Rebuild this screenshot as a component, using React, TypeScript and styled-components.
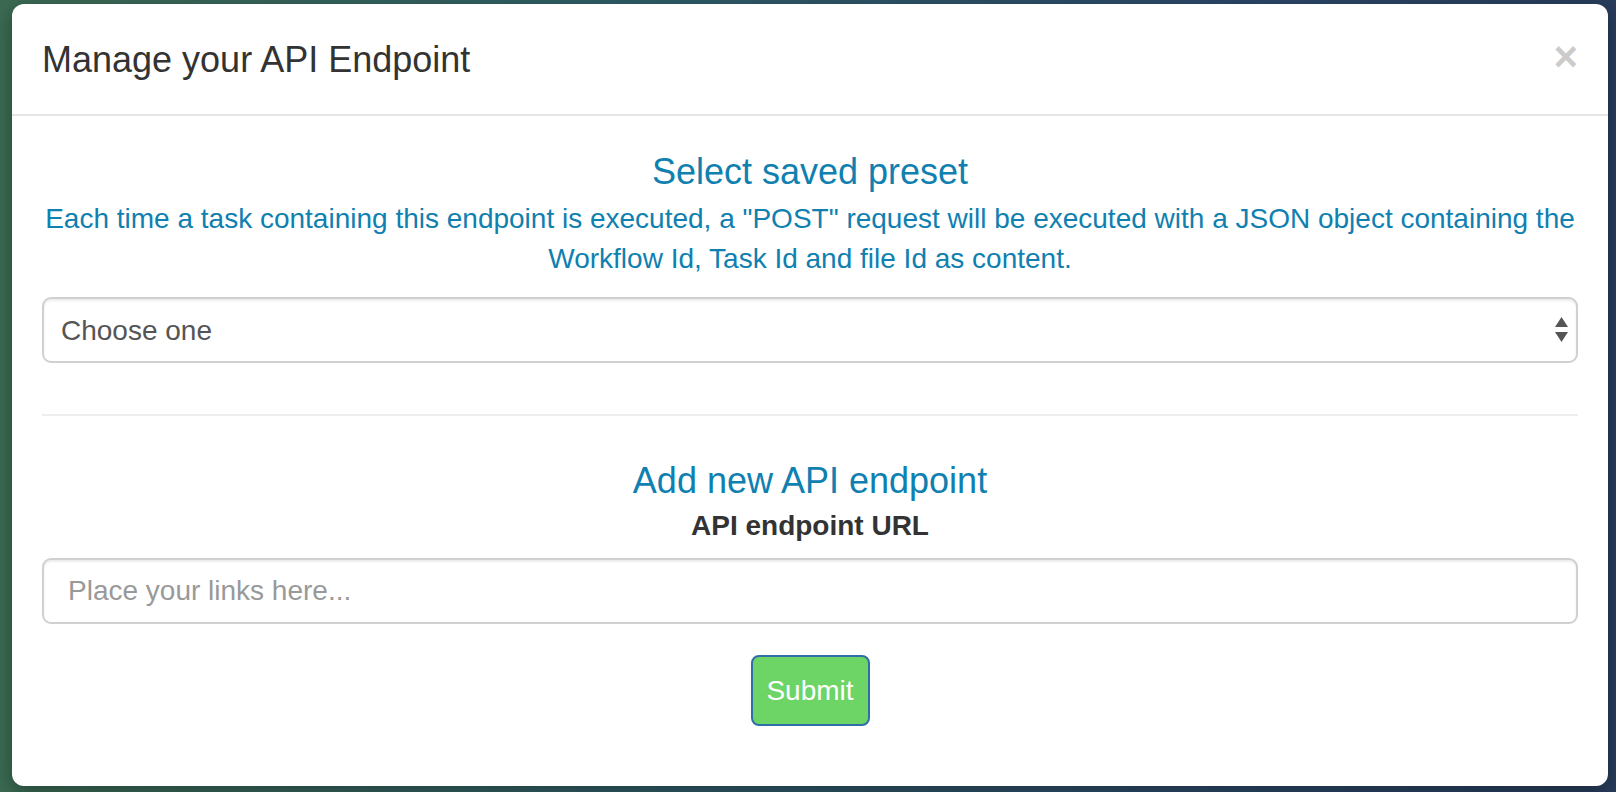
import React from "react";
import styled, { createGlobalStyle } from "styled-components";

const GlobalStyle = createGlobalStyle`
  html, body {
    margin: 0;
    padding: 0;
  }
  body {
    font-family: "Liberation Sans", Arial, Helvetica, sans-serif;
    width: 1616px;
    height: 792px;
    overflow: hidden;
    background: linear-gradient(90deg, #3b6a52 0%, #2f5c66 40%, #2b4868 75%, #283d5c 100%);
  }
  * { box-sizing: border-box; }
`;

const Backdrop = styled.div`
  width: 1616px;
  height: 792px;
  padding: 4px 8px 0 12px;
  display: flex;
  align-items: flex-start;
`;

const Modal = styled.div`
  width: 1596px;
  background: #fff;
  border-radius: 12px;
  box-shadow: 0 6px 20px rgba(0, 0, 0, 0.35);
  display: flex;
  flex-direction: column;
`;

const Header = styled.div`
  display: flex;
  justify-content: space-between;
  align-items: flex-start;
  padding: 31px 30px 29px 30px;
  border-bottom: 2px solid #e5e5e5;
`;

const Title = styled.h4`
  margin: 0;
  font-size: 36px;
  line-height: 50px;
  font-weight: 400;
  color: #333;
`;

const Close = styled.button`
  border: 0;
  background: transparent;
  padding: 0;
  margin-top: 1px;
  font-family: "Liberation Sans", Arial, sans-serif;
  font-size: 42px;
  line-height: 1;
  font-weight: 700;
  color: #000;
  opacity: 0.2;
  cursor: pointer;
`;

const Body = styled.div`
  padding: 30px 30px 60px 30px;
  display: flex;
  flex-direction: column;
`;

const SectionTitle = styled.h4<{ $top: number }>`
  margin: ${(p) => p.$top}px 0 0 0;
  font-size: 36px;
  line-height: 40px;
  font-weight: 400;
  color: #0f80b0;
  text-align: center;
`;

const Description = styled.p`
  margin: 7px 0 0 0;
  font-size: 28px;
  line-height: 40px;
  color: #0f80b0;
  text-align: center;
`;

const SelectWrap = styled.div`
  position: relative;
  margin-top: 18px;
`;

const Select = styled.select`
  appearance: none;
  -webkit-appearance: none;
  width: 100%;
  height: 66px;
  padding: 0 60px 0 17px;
  font-family: "Liberation Sans", Arial, sans-serif;
  font-size: 28px;
  color: #555;
  background: #fff;
  border: 2px solid #d0d0d0;
  border-radius: 9px;
  box-shadow: inset 0 2px 2px rgba(0, 0, 0, 0.075);
  outline: none;
`;

const Arrows = styled.svg`
  position: absolute;
  right: 10px;
  top: 20px;
  width: 13px;
  height: 26px;
  pointer-events: none;
`;

const Divider = styled.hr`
  margin: 51px 0 0 0;
  border: 0;
  border-top: 2px solid #eee;
  height: 0;
`;

const Label = styled.label`
  display: block;
  margin-top: 5px;
  font-size: 28px;
  line-height: 40px;
  font-weight: 700;
  color: #333;
  text-align: center;
`;

const Input = styled.input`
  margin-top: 12px;
  width: 100%;
  height: 66px;
  padding: 0 24px;
  font-family: "Liberation Sans", Arial, sans-serif;
  font-size: 28px;
  color: #555;
  background: #fff;
  border: 2px solid #d0d0d0;
  border-radius: 9px;
  box-shadow: inset 0 2px 2px rgba(0, 0, 0, 0.075);
  outline: none;
  &::placeholder {
    color: #999;
  }
`;

const SubmitRow = styled.div`
  display: flex;
  justify-content: center;
  margin-top: 31px;
`;

const SubmitButton = styled.button`
  width: 119px;
  height: 71px;
  padding: 0;
  font-family: "Liberation Sans", Arial, sans-serif;
  font-size: 28px;
  color: #fff;
  background: #6cd566;
  border: 2px solid #2f6ea8;
  border-radius: 8px;
  cursor: pointer;
`;

export default function App() {
  return (
    <>
      <GlobalStyle />
      <Backdrop>
        <Modal>
          <Header>
            <Title>Manage your API Endpoint</Title>
            <Close aria-label="Close">×</Close>
          </Header>
          <Body>
            <SectionTitle $top={6}>Select saved preset</SectionTitle>
            <Description>
              Each time a task containing this endpoint is executed, a "POST" request will be executed with a JSON object containing the Workflow Id, Task Id and file Id as content.
            </Description>
            <SelectWrap>
              <Select defaultValue="">
                <option value="">Choose one</option>
              </Select>
              <Arrows viewBox="0 0 13 26">
                <polygon points="6.5,0 13,10 0,10" fill="#555" />
                <polygon points="0,15 13,15 6.5,25" fill="#555" />
              </Arrows>
            </SelectWrap>
            <Divider />
            <SectionTitle $top={45}>Add new API endpoint</SectionTitle>
            <Label htmlFor="endpoint-url">API endpoint URL</Label>
            <Input id="endpoint-url" type="text" placeholder="Place your links here..." />
            <SubmitRow>
              <SubmitButton type="button">Submit</SubmitButton>
            </SubmitRow>
          </Body>
        </Modal>
      </Backdrop>
    </>
  );
}
